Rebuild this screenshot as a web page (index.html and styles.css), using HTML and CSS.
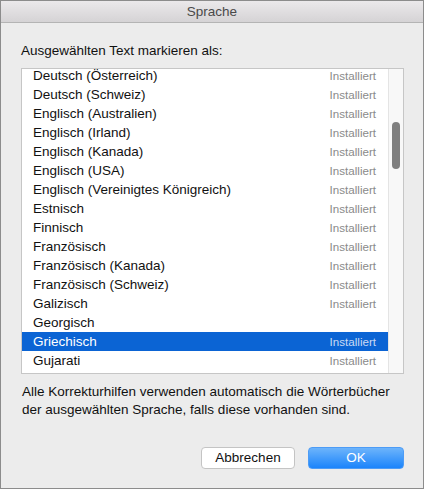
FILE: index.html
```html
<!DOCTYPE html>
<html lang="de">
<head>
<meta charset="utf-8">
<title>Sprache</title>
<link rel="stylesheet" href="styles.css">
</head>
<body>
<div class="window">
  <div class="titlebar">Sprache</div>
  <div class="content">
    <div class="label">Ausgewählten Text markieren als:</div>
    <div class="list">
      <div class="rows">
        <div class="rows-inner">
          <div class="row"><span>Deutsch (Österreich)</span><span class="status">Installiert</span></div>
          <div class="row"><span>Deutsch (Schweiz)</span><span class="status">Installiert</span></div>
          <div class="row"><span>Englisch (Australien)</span><span class="status">Installiert</span></div>
          <div class="row"><span>Englisch (Irland)</span><span class="status">Installiert</span></div>
          <div class="row"><span>Englisch (Kanada)</span><span class="status">Installiert</span></div>
          <div class="row"><span>Englisch (USA)</span><span class="status">Installiert</span></div>
          <div class="row"><span>Englisch (Vereinigtes Königreich)</span><span class="status">Installiert</span></div>
          <div class="row"><span>Estnisch</span><span class="status">Installiert</span></div>
          <div class="row"><span>Finnisch</span><span class="status">Installiert</span></div>
          <div class="row"><span>Französisch</span><span class="status">Installiert</span></div>
          <div class="row"><span>Französisch (Kanada)</span><span class="status">Installiert</span></div>
          <div class="row"><span>Französisch (Schweiz)</span><span class="status">Installiert</span></div>
          <div class="row"><span>Galizisch</span><span class="status">Installiert</span></div>
          <div class="row"><span>Georgisch</span><span class="status"></span></div>
          <div class="row selected"><span>Griechisch</span><span class="status">Installiert</span></div>
          <div class="row"><span>Gujarati</span><span class="status">Installiert</span></div>
        </div>
      </div>
      <div class="track"><div class="thumb"></div></div>
    </div>
    <p class="note">Alle Korrekturhilfen verwenden automatisch die Wörterbücher der ausgewählten Sprache, falls diese vorhanden sind.</p>
    <div class="buttons">
      <button class="btn cancel">Abbrechen</button>
      <button class="btn ok">OK</button>
    </div>
  </div>
</div>
</body>
</html>
```

FILE: styles.css
```css
html, body {
  margin: 0;
  padding: 0;
  background: #ececec;
}
body {
  font-family: "Liberation Sans", Arial, sans-serif;
  font-size: 13.5px;
  color: #1a1a1a;
}
.window {
  width: 424px;
  height: 489px;
  box-sizing: border-box;
  border: 1px solid #8c8c8c;
  background: #ececec;
  display: flex;
  flex-direction: column;
}
.titlebar {
  height: 21px;
  line-height: 22px;
  border-bottom: 1px solid #b4b4b4;
  background: linear-gradient(#ebe9eb, #d5d3d5);
  text-align: center;
  color: #4a4a4a;
  font-size: 13.5px;
}
.content {
  padding: 0 19px 0 20px;
  display: flex;
  flex-direction: column;
}
.label {
  margin-top: 20px;
  line-height: 16px;
  color: #111;
}
.list {
  margin-top: 9px;
  height: 306px;
  box-sizing: border-box;
  border: 1px solid #c6c6c6;
  background: #fff;
  display: flex;
}
.rows {
  flex: 1;
  overflow: hidden;
}
.rows-inner {
  margin-top: -3px;
}
.row {
  height: 19px;
  line-height: 20px;
  display: flex;
  justify-content: space-between;
  padding: 0 12px 0 11px;
  color: #111;
}
.status {
  font-size: 11.6px;
  color: #8a8a8a;
}
.row.selected {
  background: #0b64d4;
  color: #fff;
}
.row.selected .status {
  color: #c9d9f3;
}
.track {
  width: 15px;
  box-sizing: border-box;
  border-left: 1px solid #e4e4e4;
  background: #f8f8f8;
}
.thumb {
  margin-top: 53px;
  margin-left: 3px;
  width: 8px;
  height: 47px;
  border-radius: 4px;
  background: #7f7f7f;
}
.note {
  margin: 9px 0 0 1px;
  line-height: 18px;
  color: #111;
}
.buttons {
  margin-top: 28px;
  display: flex;
  justify-content: flex-end;
  gap: 13px;
}
.btn {
  height: 22px;
  box-sizing: border-box;
  border-radius: 4px;
  font-family: "Liberation Sans", Arial, sans-serif;
  font-size: 13.5px;
  padding: 0;
  line-height: 20px;
}
.cancel {
  width: 94px;
  background: #fff;
  border: 1px solid #c4c4c4;
  color: #111;
}
.ok {
  width: 96px;
  background: linear-gradient(#6db4fb, #1b84fb);
  border: 1px solid #4d9cf6;
  color: #fff;
}
```
